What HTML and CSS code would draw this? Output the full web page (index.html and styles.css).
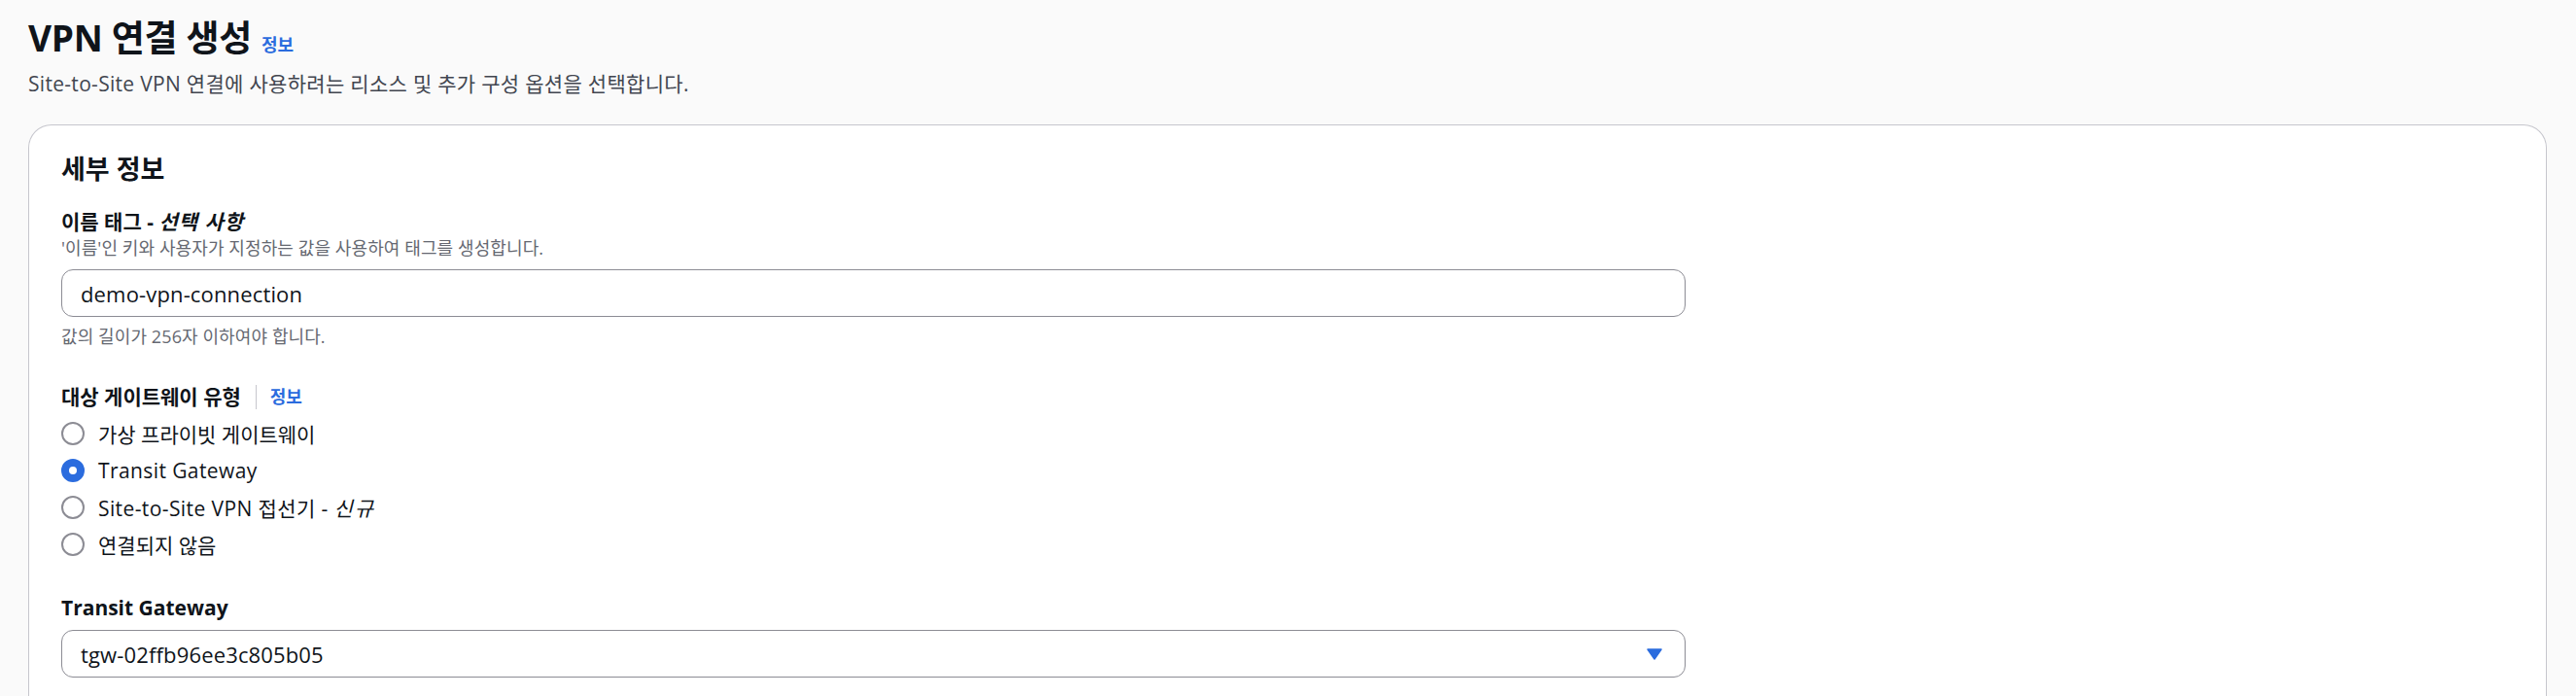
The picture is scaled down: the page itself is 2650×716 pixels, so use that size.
FILE: index.html
```html
<!DOCTYPE html>
<html lang="ko">
<head>
<meta charset="utf-8">
<title>VPN 연결 생성</title>
<link rel="stylesheet" href="styles.css">
</head>
<body>
<div class="page">
  <header class="page-header">
    <div class="title-row">
      <h1 class="title">VPN 연결 생성</h1>
      <a class="info-link info-title">정보</a>
    </div>
    <p class="subtitle">Site-to-Site VPN 연결에 사용하려는 리소스 및 추가 구성 옵션을 선택합니다.</p>
  </header>

  <section class="card">
    <h2 class="card-title">세부 정보</h2>

    <div class="field field-name">
      <div class="label">이름 태그 - <i>선택 사항</i></div>
      <div class="desc">'이름'인 키와 사용자가 지정하는 값을 사용하여 태그를 생성합니다.</div>
      <div class="input"><span>demo-vpn-connection</span></div>
      <div class="constraint">값의 길이가 256자 이하여야 합니다.</div>
    </div>

    <div class="field field-gw">
      <div class="label label-row"><span>대상 게이트웨이 유형</span><span class="sep"></span><a class="info-link">정보</a></div>
      <div class="radios">
        <div class="radio-row"><span class="radio"></span><span>가상 프라이빗 게이트웨이</span></div>
        <div class="radio-row"><span class="radio checked"></span><span class="latin">Transit Gateway</span></div>
        <div class="radio-row"><span class="radio"></span><span class="latin">Site-to-Site VPN 접선기 - <i>신규</i></span></div>
        <div class="radio-row"><span class="radio"></span><span>연결되지 않음</span></div>
      </div>
    </div>

    <div class="field field-tgw">
      <div class="label">Transit Gateway</div>
      <div class="input select"><span>tgw-02ffb96ee3c805b05</span>
        <svg class="caret" width="16" height="12" viewBox="0 0 16 12"><path d="M1 1 H15 L8 11 Z" fill="#2b6cde" stroke="#2b6cde" stroke-width="1.5" stroke-linejoin="round"/></svg>
      </div>
    </div>
  </section>
</div>
</body>
</html>
```

FILE: styles.css
```css
html, body {
  margin: 0;
  padding: 0;
}
body {
  background: #fafafa;
  font-family: "Open Sans", "Noto Sans CJK KR", sans-serif;
  color: #0f141a;
  overflow: hidden;
}
.page {
  padding: 15px 30px 0 29px;
}
.title-row {
  display: flex;
  align-items: baseline;
  gap: 10px;
}
.title {
  margin: 0;
  font-size: 37px;
  line-height: 48px;
  font-weight: 700;
  letter-spacing: -0.3px;
}
.info-link {
  color: #2b6cde;
  font-weight: 700;
  font-size: 18px;
  text-decoration: none;
}
.subtitle {
  margin: 8px 0 0 0;
  font-size: 21px;
  line-height: 30px;
  color: #424650;
  letter-spacing: 0.3px;
}
.card {
  margin-top: 27px;
  background: #ffffff;
  border: 1px solid #c6c6cd;
  border-bottom: none;
  border-radius: 24px 24px 0 0;
  padding: 27px 33px 40px 33px;
  min-height: 600px;
}
.card-title {
  margin: 0;
  font-size: 27px;
  line-height: 36px;
  font-weight: 700;
}
.field-name {
  margin-top: 21px;
}
.label {
  font-size: 21px;
  line-height: 30px;
  font-weight: 700;
}
.label i {
  font-style: italic;
  letter-spacing: 1px;
}
.desc, .constraint {
  font-size: 18px;
  line-height: 24px;
  color: #656871;
  letter-spacing: 0.1px;
}
.input {
  margin-top: 10px;
  width: 1671px;
  height: 49px;
  box-sizing: border-box;
  border: 1px solid #8c8c94;
  border-radius: 12px;
  padding: 0 19px;
  display: flex;
  align-items: center;
  font-size: 22px;
  letter-spacing: 0.15px;
  color: #0f141a;
}
.constraint {
  margin-top: 8px;
}
.field-gw {
  margin-top: 35px;
}
.label-row {
  display: flex;
  align-items: center;
}
.sep {
  width: 1px;
  height: 25px;
  background: #c6c6cd;
  margin: 0 14px 0 15px;
}
.label-row .info-link {
  font-size: 18px;
}
.radios {
  margin-top: 4px;
  display: flex;
  flex-direction: column;
}
.radio-row {
  height: 38px;
  display: flex;
  align-items: center;
  gap: 14px;
  font-size: 21px;
}
.radio-row .latin {
  letter-spacing: 0.4px;
}
.radio-row i {
  letter-spacing: 2px;
}
.radio {
  width: 24px;
  height: 24px;
  box-sizing: border-box;
  border: 2px solid #8c8c94;
  border-radius: 50%;
  background: #ffffff;
  flex: none;
}
.radio.checked {
  border: 8px solid #2b6cde;
}
.field-tgw {
  margin-top: 31px;
}
.field-tgw .input {
  margin-top: 8px;
}
.select {
  justify-content: space-between;
  padding-right: 23px;
}
.caret {
  display: block;
}
```
